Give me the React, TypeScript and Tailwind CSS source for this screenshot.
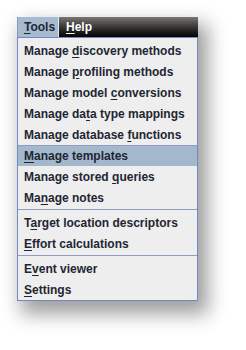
import type { ReactNode } from "react"

type Item = { pre: string; key: string; post: string; selected?: boolean }

const groups: Item[][] = [
  [
    { pre: "Manage ", key: "d", post: "iscovery methods" },
    { pre: "Manage ", key: "p", post: "rofiling methods" },
    { pre: "Manage model ", key: "c", post: "onversions" },
    { pre: "Manage da", key: "t", post: "a type mappings" },
    { pre: "Manage database ", key: "f", post: "unctions" },
  ],
  [
    { pre: "", key: "M", post: "anage templates", selected: true },
    { pre: "Manage stored ", key: "q", post: "ueries" },
    { pre: "Ma", key: "n", post: "age notes" },
  ],
  [
    { pre: "T", key: "a", post: "rget location descriptors" },
    { pre: "", key: "E", post: "ffort calculations" },
  ],
  [
    { pre: "E", key: "v", post: "ent viewer" },
    { pre: "", key: "S", post: "ettings" },
  ],
]

function Label({ pre, k, post }: { pre: string; k: string; post: string }): ReactNode {
  return (
    <span className="whitespace-pre">
      {pre}
      <span className="underline underline-offset-[2px] decoration-1">{k}</span>
      {post}
    </span>
  )
}

export default function App() {
  return (
    <div className="w-[246px] h-[350px] bg-white pt-[17px] pl-[17px] font-['Liberation_Sans',Arial,sans-serif] text-[12px] font-bold">
      <div className="w-[181px] shadow-[7px_10px_18px_3px_rgba(0,0,0,0.38)]">
        {/* menubar */}
        <div className="flex h-[20px] bg-gradient-to-b from-[#7a7674] to-[#050505]">
          <div className="flex w-[42px] items-center border-l border-[#8a9cc4] border-r border-r-[#dfe5ee] bg-[#a7bbd0] pl-[6px] text-[#1f2633]">
            <Label pre="" k="T" post="ools" />
          </div>
          <div className="flex items-center pl-[7px] text-white">
            <Label pre="" k="H" post="elp" />
          </div>
        </div>

        {/* dropdown */}
        <div className="border border-[#7489c2] bg-[#eeeeee] pt-[2px] text-[#1f2633]">
          {groups.map((group, gi) => (
            <div key={gi}>
              {gi === 1 && <div className="h-px bg-[#8e9dc0]" />}
              {gi > 1 && (
                <div className="pt-[1px] pb-[2px]">
                  <div className="h-px bg-[#8e9dc0]" />
                </div>
              )}
              {group.map((item) => (
                <div
                  key={item.pre + item.key + item.post}
                  className={`flex items-center pl-[6px] ${
                    item.selected ? "h-[20px] bg-[#a3b8cd]" : "h-[21px]"
                  }`}
                >
                  <Label pre={item.pre} k={item.key} post={item.post} />
                </div>
              ))}
            </div>
          ))}
        </div>
      </div>
    </div>
  )
}
